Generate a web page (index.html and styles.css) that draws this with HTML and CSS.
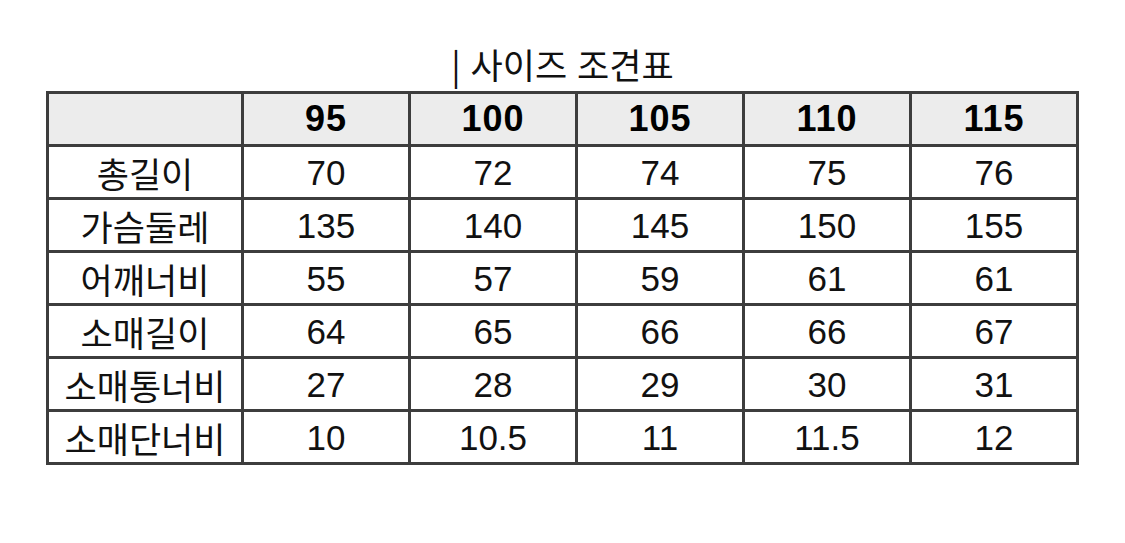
FILE: index.html
```html
<!DOCTYPE html>
<html lang="ko">
<head>
<meta charset="utf-8">
<link rel="stylesheet" href="styles.css">
</head>
<body>
<div class="page">
  <h1 class="title">| 사이즈 조견표</h1>
  <table class="size-table">
    <colgroup>
      <col class="c-label"><col><col><col><col><col>
    </colgroup>
    <thead>
      <tr><th></th><th>95</th><th>100</th><th>105</th><th>110</th><th>115</th></tr>
    </thead>
    <tbody>
      <tr><td>총길이</td><td>70</td><td>72</td><td>74</td><td>75</td><td>76</td></tr>
      <tr><td>가슴둘레</td><td>135</td><td>140</td><td>145</td><td>150</td><td>155</td></tr>
      <tr><td>어깨너비</td><td>55</td><td>57</td><td>59</td><td>61</td><td>61</td></tr>
      <tr><td>소매길이</td><td>64</td><td>65</td><td>66</td><td>66</td><td>67</td></tr>
      <tr><td>소매통너비</td><td>27</td><td>28</td><td>29</td><td>30</td><td>31</td></tr>
      <tr><td>소매단너비</td><td>10</td><td>10.5</td><td>11</td><td>11.5</td><td>12</td></tr>
    </tbody>
  </table>
</div>
</body>
</html>
```
FILE: styles.css
```css
html, body {
  margin: 0;
  padding: 0;
  background: #ffffff;
}
.page {
  padding: 43px 0 0 46px;
  font-family: "Liberation Sans", "Noto Sans CJK KR", sans-serif;
  color: #111;
}
.title {
  width: 1033px;
  margin: 0 0 6px 0;
  text-align: center;
  font-family: "Noto Sans CJK KR", sans-serif;
  font-weight: 400;
  font-size: 35px;
  line-height: 42px;
}
.size-table {
  width: 1033px;
  table-layout: fixed;
  border-collapse: collapse;
  border: 3px solid #3d3d3d;
}
.c-label { width: 195px; }
.size-table th,
.size-table td {
  border: 3px solid #3d3d3d;
  height: 50px;
  padding: 0;
  text-align: center;
  vertical-align: middle;
  font-size: 35px;
  line-height: 1;
}
.size-table th {
  background: #ececec;
  font-weight: 700;
  font-size: 36px;
  letter-spacing: 1px;
  color: #000;
}
.size-table td:first-child {
  font-family: "Noto Sans CJK KR", sans-serif;
  font-size: 35px;
}
```
